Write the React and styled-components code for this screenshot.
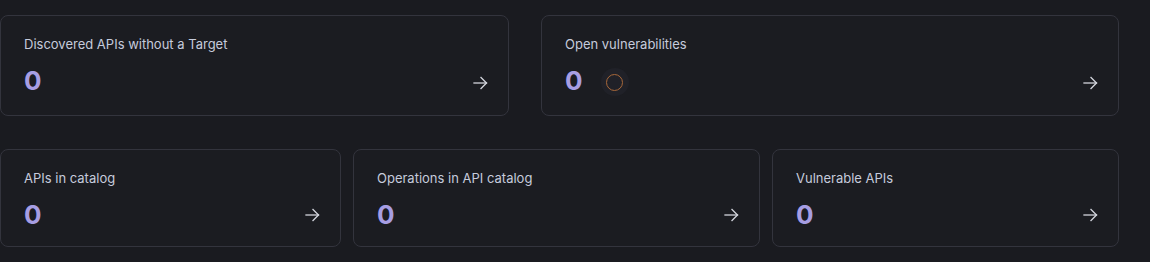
import React from "react";
import styled, { createGlobalStyle } from "styled-components";

const GlobalStyle = createGlobalStyle`
  html, body {
    margin: 0;
    padding: 0;
    background: #1a1b20;
  }
  body {
    font-family: Inter, "Noto Sans", sans-serif;
    -webkit-font-smoothing: antialiased;
  }
`;

const Page = styled.div`
  width: 1119px;
  padding-top: 15px;
  display: flex;
  flex-direction: column;
  gap: 33px;
`;

const Row = styled.div`
  display: grid;
  grid-template-columns: ${(p) => p.$cols};
  gap: ${(p) => p.$gap}px;
`;

const Card = styled.div`
  box-sizing: border-box;
  border: 1px solid #33343d;
  border-radius: 8px;
  background: #1b1c21;
  padding: 18px 20px ${(p) => p.$pb}px 23px;
  display: flex;
  flex-direction: column;
  cursor: pointer;
`;

const Title = styled.div`
  font-size: 13px;
  line-height: 20px;
  color: #c6cbdc;
`;

const ValueRow = styled.div`
  margin-top: 11px;
  height: ${(p) => p.$h}px;
  display: flex;
  align-items: center;
  justify-content: space-between;
`;

const ValueGroup = styled.div`
  display: flex;
  align-items: center;
  gap: 18px;
  align-self: flex-start;
  height: 32px;
`;

const Value = styled.div`
  font-size: 26px;
  line-height: 32px;
  font-weight: 700;
  color: #a79ee3;
`;

const Ring = styled.div`
  width: 28px;
  height: 28px;
  border-radius: 50%;
  background: #202128;
  display: flex;
  align-items: center;
  justify-content: center;
  margin-top: 2px;

  &::after {
    content: "";
    width: 15px;
    height: 15px;
    border-radius: 50%;
    border: 1px solid #a8683a;
  }
`;

const ArrowIcon = () => (
  <svg width="15" height="14" viewBox="0 0 15 14" fill="none" stroke="#d4d6de" strokeWidth="1.3" strokeLinecap="square">
    <path d="M1 7 H13.5" />
    <path d="M8 1.5 L13.5 7 L8 12.5" />
  </svg>
);

function StatCard({ title, value, ring, tall }) {
  return (
    <Card $pb={tall ? 14 : 15}>
      <Title>{title}</Title>
      <ValueRow $h={tall ? 36 : 32}>
        <ValueGroup>
          <Value>{value}</Value>
          {ring && <Ring />}
        </ValueGroup>
        <ArrowIcon />
      </ValueRow>
    </Card>
  );
}

export default function App() {
  return (
    <>
      <GlobalStyle />
      <Page>
        <Row $cols="509fr 578fr" $gap={32}>
          <StatCard title="Discovered APIs without a Target" value="0" tall />
          <StatCard title="Open vulnerabilities" value="0" ring tall />
        </Row>
        <Row $cols="341fr 407fr 347fr" $gap={12}>
          <StatCard title="APIs in catalog" value="0" />
          <StatCard title="Operations in API catalog" value="0" />
          <StatCard title="Vulnerable APIs" value="0" />
        </Row>
      </Page>
    </>
  );
}
